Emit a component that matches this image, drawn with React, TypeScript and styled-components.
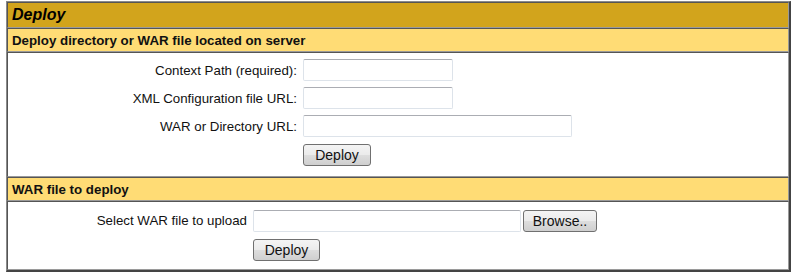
import React from 'react';
import styled, { createGlobalStyle } from 'styled-components';

const GlobalStyle = createGlobalStyle`
  body {
    margin: 0;
    background: #ffffff;
    font-family: 'Liberation Sans', Arial, sans-serif;
    color: #000;
  }
`

const Frame = styled.div`
  margin: 1px 8px 0 6px;
  border-top: 1px solid #8a8a8a;
  border-left: 1px solid #8a8a8a;
  border-right: 2px solid #444;
  border-bottom: 2px solid #444;
  display: flex;
  flex-direction: column;
`

const Cell = styled.div<{ $bg?: string }>`
  border-top: 1px solid #555;
  border-left: 1px solid #555;
  border-bottom: 1px solid #9a9a9a;
  border-right: 1px solid #9a9a9a;
  background: ${(p) => p.$bg || '#ffffff'};
`

const TitleCell = styled(Cell)`
  height: 24px;
  padding-left: 4px;
  display: flex;
  align-items: center;
  font-size: 16px;
  font-weight: bold;
  font-style: italic;
`

const HeaderCell = styled(Cell)`
  height: 22px;
  padding-left: 4px;
  display: flex;
  align-items: center;
  font-size: 13.3px;
  font-weight: bold;
  color: #111;
`

const Body = styled(Cell)<{ $h: number }>`
  height: ${(p) => p.$h}px;
  box-sizing: border-box;
`

const Form = styled.div<{ $label: number; $top: number }>`
  display: grid;
  grid-template-columns: ${(p) => p.$label}px auto;
  column-gap: 6px;
  row-gap: 6px;
  padding-top: ${(p) => p.$top}px;
  align-items: center;
  font-size: 13.3px;
`

const Label = styled.div`
  text-align: right;
  color: #111;
`

const Field = styled.div`
  display: flex;
  align-items: center;
  gap: 2px;
`

const Input = styled.input<{ $w: number }>`
  width: ${(p) => p.$w}px;
  height: 22px;
  box-sizing: border-box;
  border: 1px solid #dde3ea;
  border-top-color: #abadb3;
  border-radius: 2px;
  background: #fff;
  margin: 0;
  padding: 0 3px;
  font: inherit;
`

const Button = styled.button<{ $w: number }>`
  width: ${(p) => p.$w}px;
  height: 22px;
  box-sizing: border-box;
  margin: 1px 0 0 0;
  padding: 0;
  border: 1px solid #707070;
  border-radius: 3px;
  background: linear-gradient(#f4f4f4 0%, #ebebeb 48%, #dddddd 52%, #cfcfcf 100%);
  font-family: 'Liberation Sans', Arial, sans-serif;
  font-size: 14px;
  color: #111;
`

const Spacer = styled.div``

const App = () => {
  return (
    <>
      <GlobalStyle />
      <Frame>
        <TitleCell $bg="#D2A41C">Deploy</TitleCell>
        <HeaderCell $bg="#FFDC75">Deploy directory or WAR file located on server</HeaderCell>
        <Body $h={125}>
          <Form $label={289} $top={6}>
            <Label>Context Path (required):</Label>
            <Field><Input $w={150} /></Field>
            <Label>XML Configuration file URL:</Label>
            <Field><Input $w={150} /></Field>
            <Label>WAR or Directory URL:</Label>
            <Field><Input $w={269} /></Field>
            <Spacer />
            <Field><Button $w={68}>Deploy</Button></Field>
          </Form>
        </Body>
        <HeaderCell $bg="#FFDC75">WAR file to deploy</HeaderCell>
        <Body $h={69}>
          <Form $label={239} $top={7}>
            <Label>Select WAR file to upload</Label>
            <Field>
              <Input $w={268} />
              <Button $w={74}>Browse..</Button>
            </Field>
            <Spacer />
            <Field><Button $w={67}>Deploy</Button></Field>
          </Form>
        </Body>
      </Frame>
    </>
  )
}

export default App
